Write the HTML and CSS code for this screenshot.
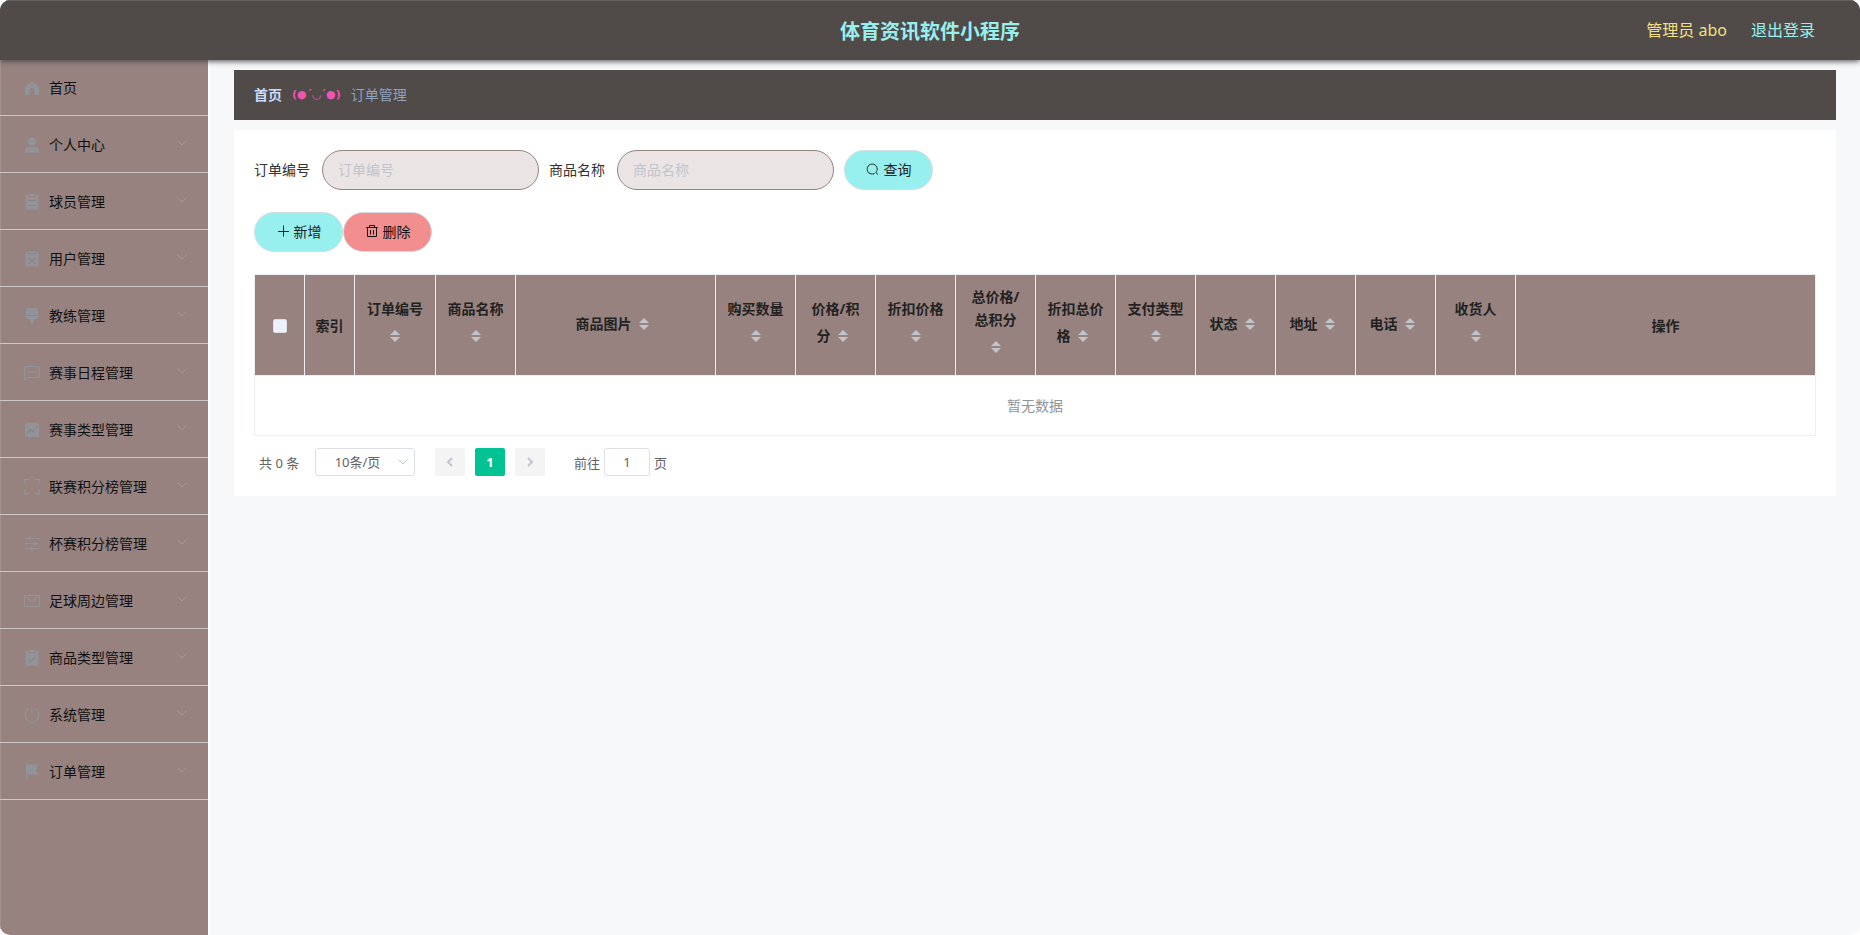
FILE: index.html
```html
<!DOCTYPE html>
<html lang="zh-CN">
<head>
<meta charset="utf-8">
<meta name="viewport" content="width=device-width, initial-scale=1">
<title>体育资讯软件小程序</title>
<link rel="stylesheet" href="styles.css">
</head>
<body>
<svg class="defs" aria-hidden="true">
  <symbol id="arrow" viewBox="0 0 12 12"><path d="M1.500 3.500 6 8l4.500-4.500" fill="none" stroke="currentColor"/></symbol>
</svg>
<div class="app">
  <header class="header">
    <h1 class="header-title">体育资讯软件小程序</h1>
    <div class="header-user">
      <span class="user-name">管理员 abo</span>
      <a class="logout" href="#">退出登录</a>
    </div>
  </header>
  <div class="body">
    <nav class="sidebar">
      <ul class="menu">
        <li class="menu-item menu-home"><a class="menu-link" href="#"><svg class="menu-icon" viewBox="0 0 18 18"><path fill="currentColor" d="M9 2.500 2 7.700V15q0 1 1 1h3.500v-4.500a2.500 2.500 0 0 1 5 0V16H15q1 0 1-1V7.700z"/></svg><span>首页</span></a></li>
        <li class="menu-item"><a class="menu-link" href="#"><svg class="menu-icon" viewBox="0 0 18 18"><g fill="currentColor"><circle cx="9" cy="5.500" r="4"/><path d="M2 16.500V14q0-3 3.500-3h7q3.500 0 3.500 3v2.500z"/></g></svg><span>个人中心</span><svg class="menu-arrow"><use href="#arrow"/></svg></a></li>
        <li class="menu-item"><a class="menu-link" href="#"><svg class="menu-icon" viewBox="0 0 18 18"><path fill="currentColor" d="M6 1h6v2H6zM2.500 2H5v2h8V2h2.500v14.500h-13z"/><path class="cut" d="M5 7.500h8M5 12.500h8"/></svg><span>球员管理</span><svg class="menu-arrow"><use href="#arrow"/></svg></a></li>
        <li class="menu-item"><a class="menu-link" href="#"><svg class="menu-icon" viewBox="0 0 18 18"><path fill="currentColor" d="M6 1h6v2H6zM2.500 2H5v2h8V2h2.500v14.500h-13z"/><path class="cut" d="m6 7.500 6 6m0-6-6 6"/></svg><span>用户管理</span><svg class="menu-arrow"><use href="#arrow"/></svg></a></li>
        <li class="menu-item"><a class="menu-link" href="#"><svg class="menu-icon" viewBox="0 0 18 18"><path fill="currentColor" d="M3 1h12v7H3zM3 9h12q0 3-3 3.200h-1.200V15a1.800 1.800 0 0 1-3.600 0v-2.800H6Q3 12 3 9z"/></svg><span>教练管理</span><svg class="menu-arrow"><use href="#arrow"/></svg></a></li>
        <li class="menu-item"><a class="menu-link" href="#"><svg class="menu-icon" viewBox="0 0 18 18"><path fill="none" stroke="currentColor" stroke-width="1.200" d="M1.500 16V4.500q0-2 2-2h11q2 0 2 2v7q0 2-2 2h-11z"/><path fill="currentColor" d="M4.500 7h2v2h-2zM8 7h2v2H8zm3.500 0h2v2h-2z"/></svg><span>赛事日程管理</span><svg class="menu-arrow"><use href="#arrow"/></svg></a></li>
        <li class="menu-item"><a class="menu-link" href="#"><svg class="menu-icon" viewBox="0 0 18 18"><rect x="2" y="2" width="14" height="14" rx="1" fill="currentColor"/><path class="cut" d="m4 12.500 3.500-4 2.500 2.500 2.500-3.500M13 6.500l1-1"/></svg><span>赛事类型管理</span><svg class="menu-arrow"><use href="#arrow"/></svg></a></li>
        <li class="menu-item"><a class="menu-link" href="#"><svg class="menu-icon" viewBox="0 0 18 18"><path fill="none" stroke="currentColor" stroke-width="1.200" d="M1.500 6.500v-5H6.500M11.500 1.500h5v5M16.500 11.500v4.500h-5M6.500 16h-5v-4.500"/></svg><span>联赛积分榜管理</span><svg class="menu-arrow"><use href="#arrow"/></svg></a></li>
        <li class="menu-item"><a class="menu-link" href="#"><svg class="menu-icon" viewBox="0 0 18 18"><path fill="none" stroke="currentColor" stroke-width="1.200" d="M2 3.500h14M2 8.500h14M2 13.500h14"/><g fill="currentColor"><circle cx="6.500" cy="3.500" r="1.700"/><circle cx="12" cy="8.500" r="1.700"/><circle cx="8" cy="13.500" r="1.700"/></g></svg><span>杯赛积分榜管理</span><svg class="menu-arrow"><use href="#arrow"/></svg></a></li>
        <li class="menu-item"><a class="menu-link" href="#"><svg class="menu-icon" viewBox="0 0 18 18"><g fill="none" stroke="currentColor" stroke-width="1.200"><rect x="1.500" y="3.500" width="15" height="11" rx="1"/><path d="m2 4 5.500 5q1.500 1 3 0L16 4"/></g></svg><span>足球周边管理</span><svg class="menu-arrow"><use href="#arrow"/></svg></a></li>
        <li class="menu-item"><a class="menu-link" href="#"><svg class="menu-icon" viewBox="0 0 18 18"><path fill="currentColor" d="M6 1h6v2H6zM2.500 2H5v2h8V2h2.500v14.500h-13z"/><path class="cut" d="M5.500 10 8 12.500 12.500 8"/></svg><span>商品类型管理</span><svg class="menu-arrow"><use href="#arrow"/></svg></a></li>
        <li class="menu-item"><a class="menu-link" href="#"><svg class="menu-icon" viewBox="0 0 18 18"><path fill="none" stroke="currentColor" stroke-width="1.200" d="M9 1v6.500M6 2.700a7 7 0 1 0 6 0"/></svg><span>系统管理</span><svg class="menu-arrow"><use href="#arrow"/></svg></a></li>
        <li class="menu-item"><a class="menu-link" href="#"><svg class="menu-icon" viewBox="0 0 18 18"><path fill="currentColor" d="M3 1h1.500v.5H15.700l-3 5 3 5H4.500v5.500H3z"/></svg><span>订单管理</span><svg class="menu-arrow"><use href="#arrow"/></svg></a></li>
      </ul>
    </nav>
    <main class="main">
      <nav class="breadcrumb" aria-label="面包屑">
        <a class="crumb-home" href="#">首页</a>
        <span class="crumb-separator">(●ˊ◡ˊ●)</span>
        <span class="crumb-current">订单管理</span>
      </nav>
      <section class="card">
        <form class="search">
          <div class="field"><label for="order-no">订单编号</label><input class="field-input" id="order-no" type="text" placeholder="订单编号"></div>
          <div class="field"><label for="goods-name">商品名称</label><input class="field-input" id="goods-name" type="text" placeholder="商品名称"></div>
          <button class="btn" type="button"><svg class="btn-icon" viewBox="0 0 14 14"><path d="M9.800 10.500a5 5 0 1 0-1 .8M9.800 10.500l2.200 2"/></svg>查询</button>
        </form>
        <div class="actions">
          <button class="btn" type="button"><svg class="btn-icon" viewBox="0 0 14 14"><path d="M7.500 1.500v11M2 7.500h11"/></svg>新增</button>
          <button class="btn btn-danger" type="button"><svg class="btn-icon" viewBox="0 0 14 14"><path d="M1 3.500h12M4.500 3.500v-2h5v2M2.500 3.500v9h9v-9M5.500 6v4.500M8.500 6v4.500"/></svg>删除</button>
        </div>
        <div class="table-wrap">
          <table class="table">
            <colgroup>
              <col class="col-check"><col class="col-index"><col><col class="col-data"><col class="col-image">
              <col class="col-data"><col class="col-data"><col class="col-data"><col class="col-data"><col class="col-data">
              <col class="col-data"><col class="col-data"><col class="col-data"><col class="col-data"><col class="col-data">
              <col class="col-action">
            </colgroup>
            <thead>
              <tr>
                <th><input class="check" type="checkbox" aria-label="全选"></th>
                <th>索引</th>
                <th>订单编号<span class="sort"></span></th>
                <th>商品名称<span class="sort"></span></th>
                <th>商品图片<span class="sort"></span></th>
                <th>购买数量<span class="sort"></span></th>
                <th>价格/积分<span class="sort"></span></th>
                <th>折扣价格<span class="sort"></span></th>
                <th>总价格/总积分<span class="sort"></span></th>
                <th>折扣总价格<span class="sort"></span></th>
                <th>支付类型<span class="sort"></span></th>
                <th>状态<span class="sort"></span></th>
                <th>地址<span class="sort"></span></th>
                <th>电话<span class="sort"></span></th>
                <th>收货人<span class="sort"></span></th>
                <th>操作</th>
              </tr>
            </thead>
            <tbody>
              <tr><td class="empty" colspan="16">暂无数据</td></tr>
            </tbody>
          </table>
        </div>
        <div class="pagination">
          <span class="total">共 0 条</span>
          <span class="page-size"><select class="page-select" aria-label="每页条数"><option>10条/页</option></select><svg class="select-arrow"><use href="#arrow"/></svg></span>
          <div class="pager">
            <button class="page-btn" type="button" disabled aria-label="上一页"><svg class="page-icon" viewBox="0 0 12 12"><path d="M8 2 4 6l4 4"/></svg></button>
            <button class="page-btn page-active" type="button">1</button>
            <button class="page-btn" type="button" disabled aria-label="下一页"><svg class="page-icon" viewBox="0 0 12 12"><path d="m4 2 4 4-4 4"/></svg></button>
          </div>
          <div class="jump"><label for="jump">前往</label><input class="jump-input" id="jump" type="text" value="1"><span>页</span></div>
        </div>
      </section>
    </main>
  </div>
</div>
</body>
</html>
```

FILE: styles.css
```css
* { box-sizing: border-box; }

body {
  margin: 0;
  background: #fff;
  color: #333;
  font-family: "Noto Sans", "Noto Sans CJK SC", sans-serif;
  font-size: 14px;
}

a { text-decoration: none; }
button, input, select { font: inherit; }
.defs { display: none; }

.app {
  display: flex;
  flex-direction: column;
  min-height: 100vh;
  overflow: hidden;
  border-radius: 10px;
  background: #f7f8fa;
}

.header {
  display: grid;
  grid-template-columns: 1fr auto 1fr;
  align-items: center;
  height: 60px;
  padding: 0 45px;
  border-top: 1px solid #666161;
  background: #504a49;
  box-shadow: 0 1px 6px #444;
  z-index: 1;
}

.header-title {
  grid-column: 2;
  margin: 0;
  color: #98f0ee;
  font-size: 20px;
  font-weight: 700;
}

.header-user {
  display: flex;
  justify-content: flex-end;
  gap: 24px;
  padding-bottom: 3px;
  font-size: 16px;
}

.user-name { color: #f3e17f; }
.logout { color: #98f0ee; }

.body { display: flex; flex: 1; }

.sidebar {
  flex: none;
  width: 210px;
  border-right: 2px solid #fff;
  background: #978280;
  box-shadow: inset 1px 0 #a29190;
}

.menu { margin: 0; padding: 0; list-style: none; }

.menu-item {
  height: 57px;
  border-bottom: 1px solid #ccc8c7;
}

.menu-link {
  display: flex;
  align-items: center;
  height: 56px;
  padding: 0 20px 0 23px;
  color: #111;
}

.menu-home { height: 56px; }
.menu-home .menu-link { height: 54px; }

.menu-icon {
  width: 18px;
  height: 18px;
  margin: 2px 8px 0 0;
  color: #909399;
}

.cut { fill: none; stroke: #978280; stroke-width: 1.200; }

.menu-arrow {
  width: 12px;
  height: 12px;
  margin: 0 0 2px auto;
  color: #a39998;
}

.main { flex: 1; min-width: 0; padding: 10px 24px; }

.breadcrumb {
  display: flex;
  align-items: center;
  gap: 10px;
  height: 50px;
  margin-bottom: 10px;
  padding: 0 20px 2px;
  background: #504a49;
}

.crumb-home { color: #cbdcff; font-weight: 700; }

.crumb-separator {
  color: #f252b0;
  font-family: "DejaVu Sans", sans-serif;
  font-size: 11px;
  font-weight: 700;
}

.crumb-current { color: #8fa3bd; }

.card { padding: 20px; background: #fff; }

.search { display: flex; flex-wrap: wrap; gap: 10px; margin-bottom: 22px; }
.field { display: flex; align-items: center; gap: 12px; }
.field label { padding-bottom: 2px; }

.field-input {
  width: 217px;
  height: 40px;
  padding: 0 15px 2px;
  border: 1px solid #978280;
  border-radius: 20px;
  background: #eae5e4;
  color: #333;
}

.field-input::placeholder { color: #c0c4cc; opacity: 1; }

.btn {
  display: flex;
  align-items: center;
  justify-content: center;
  gap: 4px;
  min-width: 89px;
  height: 40px;
  padding: 0 19px 2px;
  border: 1px solid #d6dce3;
  border-radius: 20px;
  background: #98f0ee;
  color: #222;
}

.btn-danger { background: #f28e8e; color: #111; }

.btn-icon {
  width: 14px;
  height: 14px;
  fill: none;
  stroke: currentColor;
}

.actions { display: flex; margin-bottom: 22px; }

.table-wrap {
  overflow-x: auto;
  border: solid #ebeef5;
  border-width: 1px 0 0 1px;
}

.table {
  width: 100%;
  min-width: 1400px;
  table-layout: fixed;
  border-collapse: separate;
  border-spacing: 0;
}

.col-check, .col-index { width: 50px; }
.col-data { width: 80px; }
.col-image { width: 200px; }
.col-action { width: 300px; }

.table th {
  padding: 10px;
  border: solid #ebeef5;
  border-width: 0 1px 1px 0;
  background: #978280;
  color: #222;
  font-weight: 700;
  line-height: 23px;
}

.check {
  display: block;
  width: 14px;
  height: 14px;
  margin: 2px auto 0;
  appearance: none;
  border: 1px solid #dcdfe6;
  border-radius: 2px;
  background: #edf2fe;
}

.sort {
  display: inline-flex;
  flex-direction: column;
  align-items: center;
  gap: 2px;
  width: 24px;
  height: 34px;
  padding-top: 10px;
  vertical-align: middle;
}

.sort::before, .sort::after {
  content: "";
  border: solid transparent;
  border-width: 0 5px;
}

.sort::before { border-bottom: 5px solid #c0c4cc; }
.sort::after { border-top: 5px solid #c0c4cc; }

.empty {
  height: 60px;
  padding: 0 0 2px;
  border: solid #ebeef5;
  border-width: 0 1px 1px 0;
  color: #909399;
  text-align: center;
}

.pagination {
  display: flex;
  align-items: center;
  margin-top: 12px;
  padding: 0 5px;
  color: #606266;
  font-size: 13px;
}

.total { min-width: 46px; margin-right: 10px; }
.page-size { position: relative; }

.page-select {
  width: 100px;
  height: 28px;
  padding: 0 15px 0 0;
  appearance: none;
  border: 1px solid #dcdfe6;
  border-radius: 3px;
  background: #fff;
  color: #606266;
  text-align: center;
  text-align-last: center;
}

.select-arrow {
  position: absolute;
  top: 8px;
  right: 6px;
  width: 12px;
  height: 12px;
  color: #c0c4cc;
  pointer-events: none;
}

.pager { display: flex; gap: 10px; margin: 0 29px 0 20px; }

.page-btn {
  display: grid;
  place-items: center;
  width: 30px;
  height: 28px;
  padding: 0;
  border: 0;
  border-radius: 2px;
  background: #f4f4f5;
  color: #c0c4cc;
}

.page-active { background: #00c292; color: #fff; font-weight: 700; }

.page-icon {
  width: 12px;
  height: 12px;
  fill: none;
  stroke: currentColor;
  stroke-width: 2;
}

.jump { display: flex; align-items: center; gap: 4px; }

.jump-input {
  width: 46px;
  height: 28px;
  padding: 0;
  border: 1px solid #dcdfe6;
  border-radius: 3px;
  color: #606266;
  text-align: center;
}
```
